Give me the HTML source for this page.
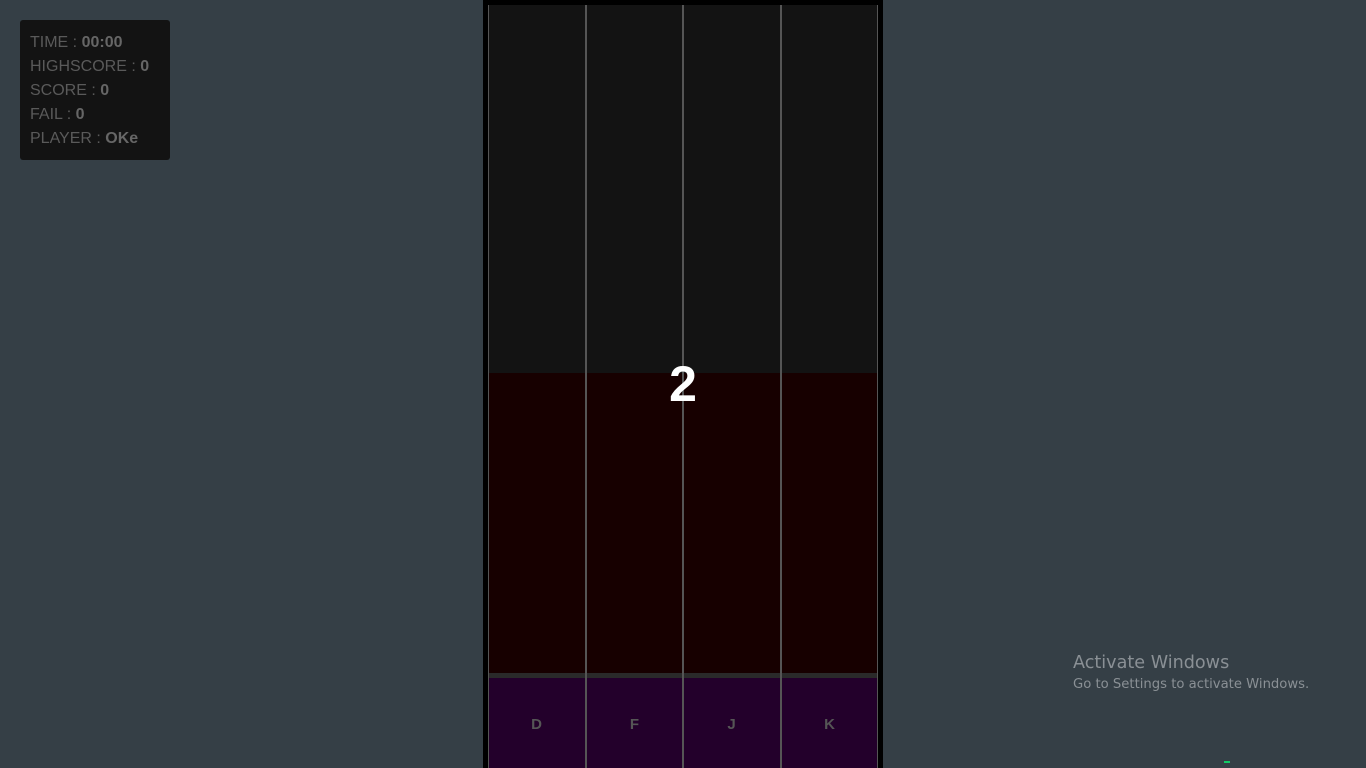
<!DOCTYPE html>
<html><head><meta charset="utf-8"><style>
html,body{margin:0;padding:0;width:1366px;height:768px;overflow:hidden;background:#353f46;font-family:"Liberation Sans",sans-serif;}
.panel{position:absolute;left:20px;top:20px;width:150px;height:140px;background:#131313;border-radius:3px;color:#5a5a5a;font-size:16px;font-family:"Liberation Sans",Arial,sans-serif;}
.panel div{position:absolute;left:10px;}
.panel b{color:#666;}
.game{position:absolute;left:483px;top:0;width:400px;height:768px;background:#000;}
.z{position:absolute;left:488px;width:390px;}
.line{position:absolute;top:5px;height:763px;background:#555;}
.key{position:absolute;top:716px;width:97px;text-align:center;color:#555;font-weight:bold;font-size:15px;}
.aw{position:absolute;left:1073px;color:#8a9095;font-family:"DejaVu Sans","Liberation Sans",sans-serif;white-space:nowrap;}
</style></head><body>
<div class="panel">
<div style="top:14px">TIME : <b>00:00</b></div>
<div style="top:38px">HIGHSCORE : <b>0</b></div>
<div style="top:62px">SCORE : <b>0</b></div>
<div style="top:86px">FAIL : <b>0</b></div>
<div style="top:110px">PLAYER : <b>OKe</b></div>
</div>
<div class="game"></div>
<div class="z" style="top:5px;height:368px;background:#131313"></div>
<div class="z" style="top:373px;height:300px;background:#170000"></div>
<div class="z" style="top:673px;height:5px;background:#2a2a2a"></div>
<div class="z" style="top:678px;height:90px;background:#23002b"></div>
<div class="line" style="left:488px;width:1px"></div>
<div class="line" style="left:585px;width:2px"></div>
<div class="line" style="left:682px;width:2px"></div>
<div class="line" style="left:780px;width:2px"></div>
<div class="line" style="left:877px;width:1px"></div>
<div class="key" style="left:488px">D</div>
<div class="key" style="left:586px">F</div>
<div class="key" style="left:683px">J</div>
<div class="key" style="left:781px">K</div>
<div style="position:absolute;left:633px;width:100px;top:356px;text-align:center;color:#fff;font-weight:bold;font-size:50px;line-height:56px">2</div>
<div class="aw" style="top:653px;font-size:17.6px">Activate Windows</div>
<div class="aw" style="top:677px;font-size:13.2px">Go to Settings to activate Windows.</div>
<div style="position:absolute;left:1224px;top:761px;width:6px;height:2px;background:#1c6;"></div>
</body></html>
